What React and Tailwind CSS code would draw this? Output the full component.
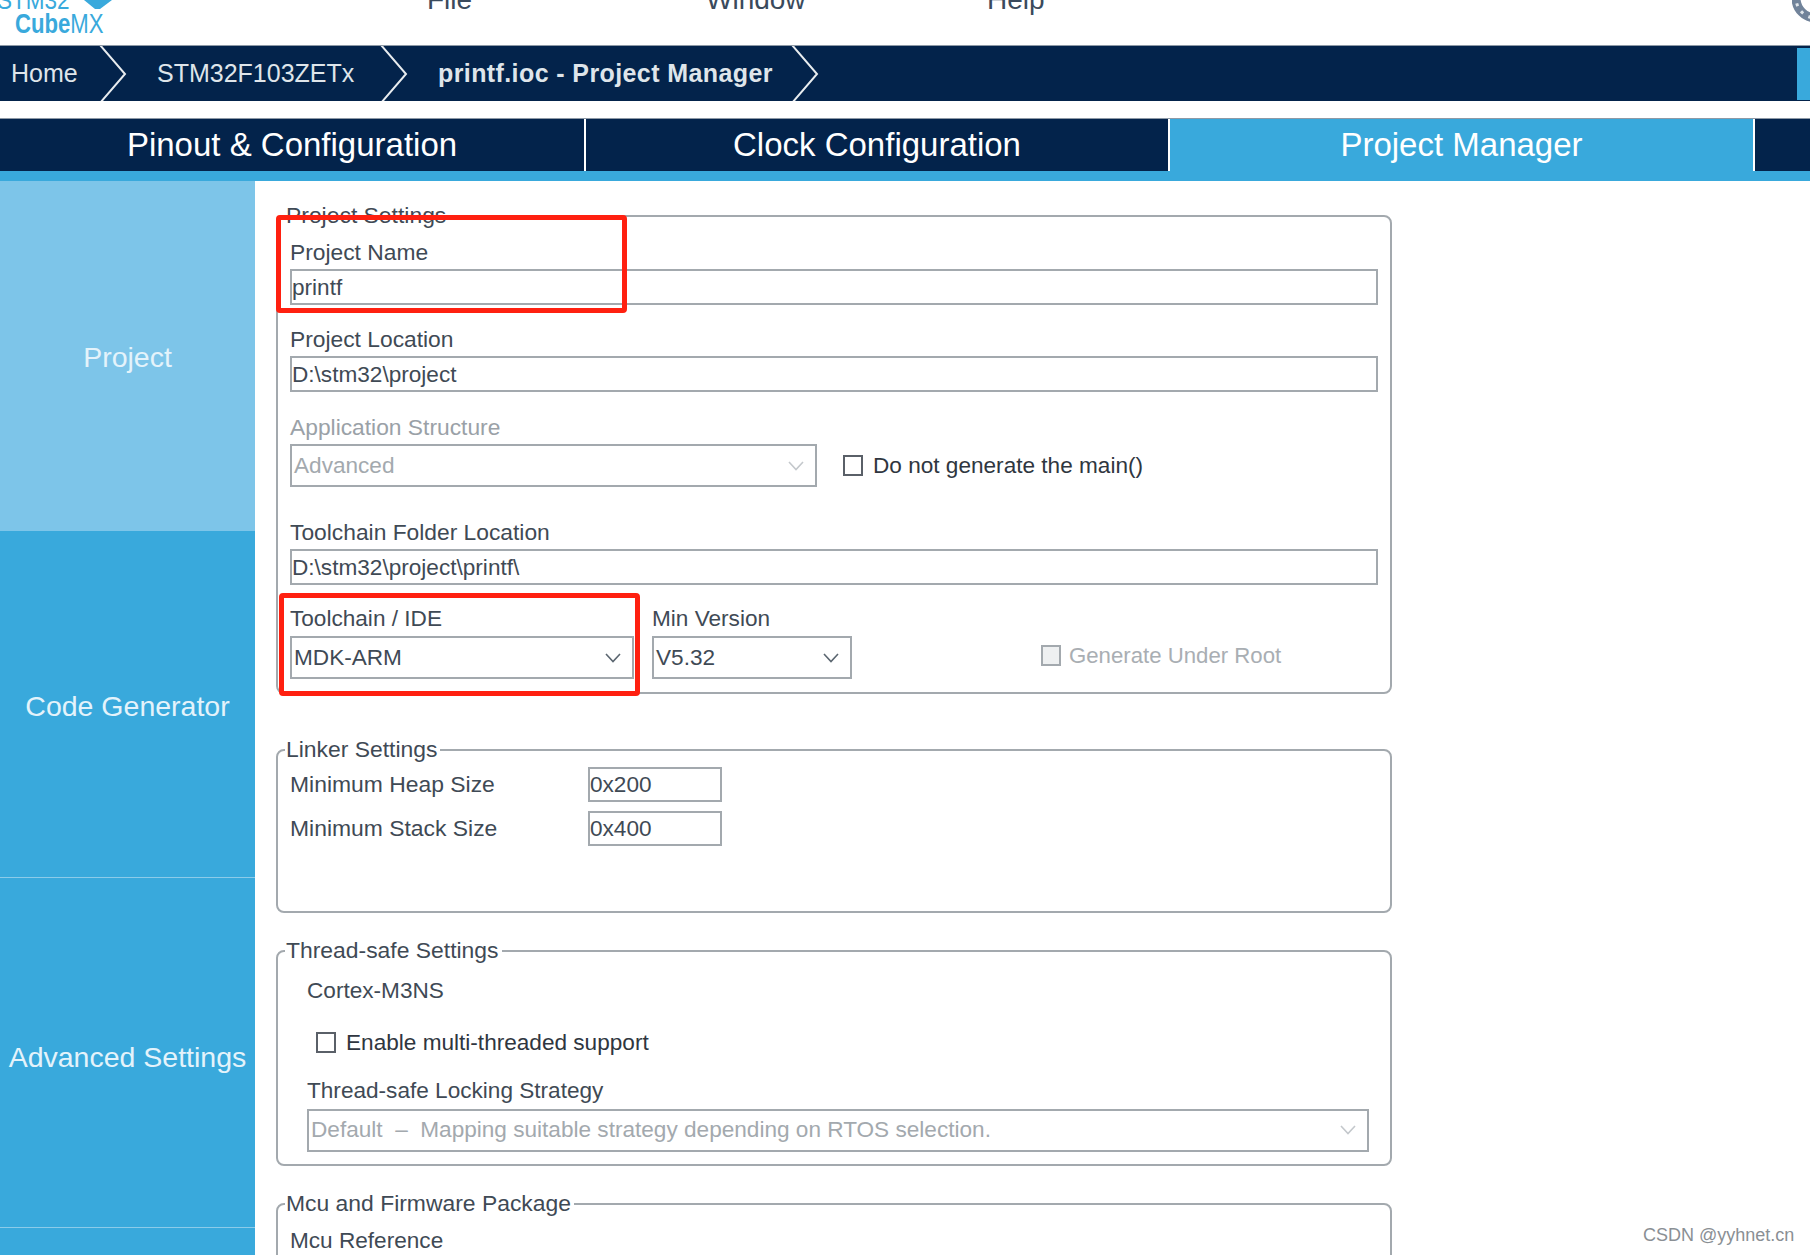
const SANS = "font-['Liberation_Sans',Arial,sans-serif]";

function Chevron({ dim }) {
  return (
    <svg width="16" height="10" viewBox="0 0 16 10" fill="none" className="shrink-0">
      <path d="M1 1l7 7.5L15 1" stroke={dim ? "#c4c8cc" : "#5b6670"} strokeWidth="1.6" />
    </svg>
  );
}

function Fieldset({ legend, className, hideLine, children }) {
  return (
    <section className={`relative border-2 border-[#a3a9ae] rounded-[8px] ml-[21px] w-[1116px] ${className}`}>
      <span className={`absolute left-[7px] -top-[15px] px-[1px] leading-[26px] text-[22.9px] text-[#3f4a55] ${hideLine ? "" : "bg-white pr-[3px]"}`}>{legend}</span>
      {children}
    </section>
  );
}

function Field({ label, value, className = "" }) {
  return (
    <div className={className}>
      <div className="leading-[26px] text-[22.8px] text-[#3f4a55]">{label}</div>
      <div className="mt-[4px] h-[36px] border-2 border-[#a3a9ae] leading-[33px] text-[#3f4a55]">{value}</div>
    </div>
  );
}

function Select({ value, width, disabled, className = "" }) {
  return (
    <div className={`h-[43px] border-2 border-[#a3a9ae] flex items-center justify-between pl-[2px] pr-[11px] ${width} ${className} ${disabled ? "text-[#a3a9ae]" : "text-[#3f4a55]"}`}>
      <span>{value}</span>
      <Chevron dim={disabled} />
    </div>
  );
}

function Check({ label, disabled, className = "" }) {
  return (
    <div className={`flex items-center whitespace-nowrap ${disabled ? "gap-[8px] text-[22.2px]" : "gap-[10px]"} ${className}`}>
      <span className={`w-[20px] h-[21px] border-2 ${disabled ? "border-[#a3a9ae] bg-[#eef0f1]" : "border-[#5a6068]"}`} />
      <span className={disabled ? "text-[#a9aeb3]" : "text-[#2f3640]"}>{label}</span>
    </div>
  );
}

export default function App() {
  const crumbs = [
    { text: "Home", w: "w-[128px]", cls: "pl-[11px]" },
    { text: "STM32F103ZETx", w: "w-[281px]", cls: "pl-[29px]" },
    { text: "printf.ioc - Project Manager", w: "w-[411px]", cls: "pl-[29px] font-bold tracking-[0.4px]" },
  ];
  const side = [
    { text: "Project", h: "h-[350px]", cls: "bg-[#7dc5e9] pt-[2px]" },
    { text: "Code Generator", h: "h-[346px]", cls: "bg-[#39a9dc] pt-[4px]" },
    { text: "Advanced Settings", h: "h-[350px]", cls: "bg-[#39a9dc] border-t border-[#8ccbe9] pt-[9px]" },
    { text: "", h: "h-[28px]", cls: "bg-[#39a9dc] border-t border-[#8ccbe9]" },
  ];

  return (
    <div className={`relative w-[1810px] h-[1255px] overflow-hidden bg-white ${SANS} text-[22.6px]`}>
      <header className="h-[45px] relative overflow-hidden">
        <div className="absolute left-[-3px] top-[-12px] leading-[24px] text-[25px] text-[#39a9dc] scale-x-[0.9] origin-left">STM32</div>
        <svg className="absolute left-[82px] top-0" width="34" height="10" viewBox="0 0 34 10">
          <path d="M2 0h28l-12 9h-5z" fill="#39a9dc" />
        </svg>
        <div className="absolute left-[15px] top-[10px] leading-[28px] text-[27px] font-bold text-[#39a9dc] scale-x-[0.82] origin-left whitespace-nowrap">
          Cube<span className="font-normal">MX</span>
        </div>
        <nav className="flex pl-[427px] -mt-[16px] text-[28px] leading-[32px] text-[#3a4a5c]">
          <span className="w-[279px]">File</span>
          <span className="w-[281px]">Window</span>
          <span>Help</span>
        </nav>
        <svg className="absolute right-0 top-0" width="18" height="24" viewBox="0 0 18 24" fill="none">
          <circle cx="24" cy="-2" r="20" stroke="#71839a" strokeWidth="9" />
          <circle cx="24" cy="-2" r="20" stroke="#dfe5ea" strokeWidth="3" strokeDasharray="3 6" />
        </svg>
      </header>

      <div className="h-[56px] bg-[#03234b] flex items-center text-[25px] text-[#dfe5ea] overflow-hidden relative border-t border-[#8d99a6]">
        {crumbs.map((c) => (
          <div key={c.text} className={`h-full flex items-center relative shrink-0 ${c.w} ${c.cls}`}>
            <span className="whitespace-nowrap">{c.text}</span>
            <svg className="absolute right-0 top-0" width="30" height="56" viewBox="0 0 30 56" fill="none">
              <path d="M2 -1L27 28L2 57" stroke="#e8ecef" strokeWidth="2" />
            </svg>
          </div>
        ))}
        <div className="ml-auto w-[13px] h-[52px] bg-[#39a9dc]" />
      </div>

      <div className="mt-[17px] flex h-[53px] text-[33px] text-white border-t border-[#8d99a6]">
        <div className="w-[584px] bg-[#03234b] flex items-center justify-center">Pinout &amp; Configuration</div>
        <div className="w-[584px] bg-[#03234b] border-l-2 border-white flex items-center justify-center">Clock Configuration</div>
        <div className="w-[585px] bg-[#39a9dc] border-l-2 border-white flex items-center justify-center">Project Manager</div>
        <div className="flex-1 bg-[#03234b] border-l-2 border-white" />
      </div>
      <div className="h-[10px] bg-[#39a9dc]" />

      <div className="flex">
        <aside className="w-[255px] shrink-0 flex flex-col">
          {side.map((s, i) => (
            <div key={i} className={`${s.h} ${s.cls} flex items-center justify-center text-[28.5px] text-[#e4f3fb] whitespace-nowrap`}>
              {s.text}
            </div>
          ))}
        </aside>

        <main className="flex-1 pt-[34px]">
          <Fieldset legend="Project Settings" className="h-[479px]" hideLine>
            <div className="px-[12px] pt-[22px]">
              <Field label="Project Name" value="printf" />
              <Field label="Project Location" value="D:\stm32\project" className="mt-[21px]" />
              <div className="mt-[22px] leading-[26px] text-[22.8px] text-[#9aa1a7]">Application Structure</div>
              <div className="mt-[4px] flex items-center">
                <Select value="Advanced" width="w-[527px]" disabled />
                <Check label="Do not generate the main()" className="ml-[26px]" />
              </div>
              <Field label="Toolchain Folder Location" value="D:\stm32\project\printf\" className="mt-[32px]" />
              <div className="mt-[21px] flex items-end">
                <div className="w-[344px]">
                  <div className="leading-[26px] text-[#3f4a55]">Toolchain / IDE</div>
                  <Select value="MDK-ARM" width="w-full" className="mt-[4px]" />
                </div>
                <div className="ml-[18px] w-[200px]">
                  <div className="leading-[26px] text-[#3f4a55]">Min Version</div>
                  <Select value="V5.32" width="w-full" className="mt-[4px]" />
                </div>
                <Check label="Generate Under Root" disabled className="ml-[189px] mb-[7px]" />
              </div>
            </div>
          </Fieldset>

          <Fieldset legend="Linker Settings" className="mt-[55px] h-[164px]">
            <div className="px-[12px] pt-[16px] flex flex-col gap-[9px]">
              {[["Minimum Heap Size", "0x200"], ["Minimum Stack Size", "0x400"]].map(([l, v]) => (
                <div key={l} className="flex items-center">
                  <span className="w-[298px] text-[22.9px] text-[#3f4a55]">{l}</span>
                  <span className="w-[134px] h-[35px] border-2 border-[#a3a9ae] leading-[32px] text-[#3f4a55]">{v}</span>
                </div>
              ))}
            </div>
          </Fieldset>

          <Fieldset legend="Thread-safe Settings" className="mt-[37px] h-[216px]">
            <div className="pl-[29px] pr-[21px] pt-[26px]">
              <div className="leading-[26px] text-[#3f4a55]">Cortex-M3NS</div>
              <Check label="Enable multi-threaded support" className="mt-[22px] ml-[9px]" />
              <div className="mt-[18px] leading-[26px] text-[#3f4a55]">Thread-safe Locking Strategy</div>
              <Select value="Default  –  Mapping suitable strategy depending on RTOS selection." width="w-full" disabled className="mt-[5px] whitespace-pre" />
            </div>
          </Fieldset>

          <Fieldset legend="Mcu and Firmware Package" className="mt-[37px] h-[120px]">
            <div className="px-[12px] pt-[23px] leading-[26px] text-[#3f4a55]">Mcu Reference</div>
          </Fieldset>
        </main>
      </div>

      <div className="absolute left-[276px] top-[215px] w-[351px] h-[98px] border-[5px] border-[#ff2010] rounded-[4px]" />
      <div className="absolute left-[279px] top-[593px] w-[361px] h-[103px] border-[5px] border-[#ff2010] rounded-[4px]" />
      <div className="absolute left-[1643px] top-[1223px] text-[18px] leading-[24px] text-[#8a8f94]">CSDN @yyhnet.cn</div>
    </div>
  );
}
